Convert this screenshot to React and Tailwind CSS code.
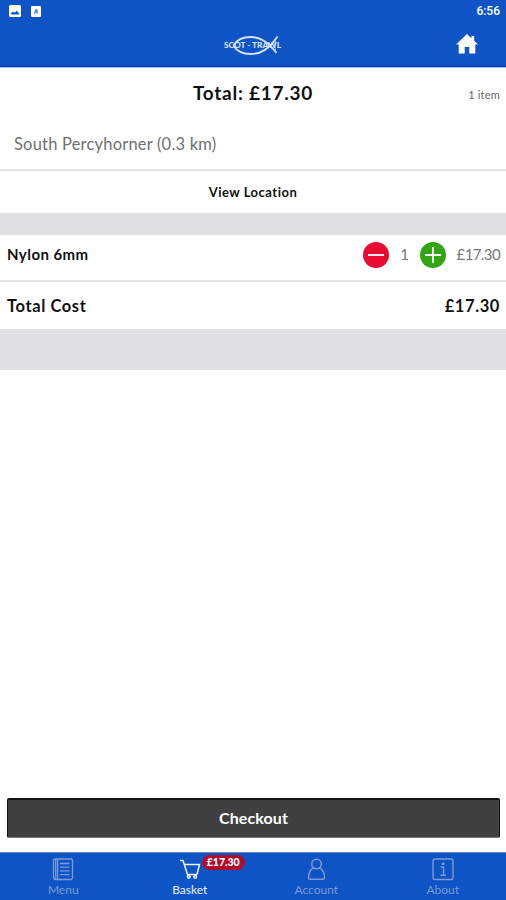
import { useState } from 'react';

const UNIT_PRICE = 17.3;

const formatPrice = (value) => `£${value.toFixed(2)}`;

const PictureIcon = () => (
  <svg width="12" height="12" viewBox="0 0 12 12">
    <rect width="12" height="12" rx="1.5" fill="#fff" />
    <path d="M2.200 9.500V7.800L4.300 6.800 5.800 7.800 7.800 5.800 9.800 8V9.500Z" fill="#0e54c5" />
  </svg>
);

const KeyboardIcon = () => (
  <svg width="10" height="11" viewBox="0 0 10 11">
    <rect width="10" height="11" rx="1.2" fill="#fff" />
    <path d="M2.800 7.800 4.400 3.200h2l.6 4.400H5.600l-.1-1H4.400l-.4 1.200Z" fill="#4f80cf" />
  </svg>
);

const Logo = () => (
  <svg width="60" height="24" viewBox="0 0 60 24" fill="none">
    <path d="M10.500 12.500C14 6.500 20 4 27.500 4 38 4 45 9.500 53.500 20M10.500 12.500C14 18.500 20 21 27.500 21 38 21 45.500 16.500 54.500 3.500" stroke="#d5e2f8" strokeWidth="1.900" />
    <path d="M54.500 3.500c-3.500 5.500-3.500 10.500-1 16.500" stroke="#a9c3ef" strokeWidth="1" />
    <text x="1" y="14.800" textLength="57" lengthAdjust="spacingAndGlyphs" fontSize="6.500" fontWeight="900" fill="#d5e2f8" fontFamily="Lato, sans-serif">SCOT - TRAWL</text>
  </svg>
);

const HomeIcon = () => (
  <svg width="22" height="20" viewBox="0 0 22 20" fill="#fff">
    <path d="M11 0 15.500 4.200V2H18.200V6.800L22 10.500H19.300V19.500H13.300V13H8.700V19.500H2.700V10.500H0Z" />
  </svg>
);

const MenuIcon = () => (
  <svg width="22" height="23" viewBox="0 0 22 23" fill="none" stroke="currentColor" strokeWidth="1.300">
    <rect x="1.500" y="1" width="19" height="20.500" rx="1.800" />
    <path d="M3.700 1v20M5.600 1v20" />
    <path d="M8 5.500h9.500M8 9.200h9.500M8 12.900h9.500M8 16.600h9.500" />
  </svg>
);

const BasketIcon = () => (
  <svg width="22" height="21" viewBox="0 0 22 21" fill="none" stroke="currentColor" strokeWidth="1.500">
    <path d="M1 1.500h3L8.500 15.500h9.500M5.300 5.500H20.500L18 15.500" />
    <circle cx="9.800" cy="17.800" r="1.400" />
    <circle cx="16.200" cy="17.800" r="1.400" />
  </svg>
);

const AccountIcon = () => (
  <svg width="20" height="23" viewBox="0 0 20 23" fill="none" stroke="currentColor" strokeWidth="1.500">
    <circle cx="10.500" cy="6" r="4.800" />
    <path d="M7.300 9.700C4.200 12 2.500 15.500 2.500 19.300c0 1.300.7 2 1.800 2h12.400c1.100 0 1.800-.7 1.800-2 0-3.800-1.700-7.300-4.800-9.600" />
  </svg>
);

const AboutIcon = () => (
  <svg width="22" height="23" viewBox="0 0 22 23" fill="none" stroke="currentColor" strokeWidth="1.400">
    <rect x="1" y="1" width="20" height="20.500" rx="2" />
    <path d="M8.500 9h3v8M8.300 17.300h5.600" />
    <circle cx="11.200" cy="5.800" r=".8" fill="currentColor" />
  </svg>
);

const StepButton = ({ label, plus, onClick }) => (
  <button
    onClick={onClick}
    aria-label={label}
    className={`flex h-[26px] w-[26px] items-center justify-center rounded-full ${plus ? 'bg-[#32a612]' : 'bg-[#e80c30]'}`}
  >
    <svg width="16" height="16" viewBox="0 0 16 16" stroke="#fff" strokeWidth="1.800">
      <path d={plus ? 'M0 8h16M8 0v16' : 'M0 8h16'} />
    </svg>
  </button>
);

const tabs = [
  { id: 'menu', label: 'Menu', icon: MenuIcon },
  { id: 'basket', label: 'Basket', icon: BasketIcon },
  { id: 'account', label: 'Account', icon: AccountIcon },
  { id: 'about', label: 'About', icon: AboutIcon },
];

const App = () => {
  const [quantity, setQuantity] = useState(1);
  const [activeTab, setActiveTab] = useState('basket');
  const total = formatPrice(quantity * UNIT_PRICE);

  return (
    <div className="flex h-screen w-full flex-col bg-white font-[Lato,sans-serif] text-[#111]">
      {/* Status bar and app header */}
      <header className="h-[68px] shrink-0 border-b border-[#9db9ee] bg-[#0e54c5]">
        <div className="flex h-[22px] items-center justify-between pl-[9px] pr-[6px]">
          <div className="flex items-center gap-[10px]">
            <PictureIcon />
            <KeyboardIcon />
          </div>
          <span className="font-[Roboto,sans-serif] text-[12px] font-medium leading-none text-white">6:56</span>
        </div>
        <div className="grid h-[45px] grid-cols-3 items-center border-b-2 border-[#0b47b5] px-[28px]">
          <span />
          <div className="flex justify-center pt-[2px]">
            <Logo />
          </div>
          <div className="flex justify-end pt-px">
            <HomeIcon />
          </div>
        </div>
      </header>

      {/* Order summary */}
      <div className="grid h-[51px] shrink-0 grid-cols-[1fr_auto_1fr] items-center px-[6px]">
        <span />
        <h1 className="text-[19px] font-bold tracking-[0.75px]">Total: {total}</h1>
        <span className="pt-[3px] text-right text-[11px] tracking-[0.2px] text-[#666]">
          {quantity} {quantity === 1 ? 'item' : 'items'}
        </span>
      </div>
      <div className="flex h-[52px] shrink-0 items-center border-b-2 border-[#e3e3e4] px-[14px] text-[16.500px] tracking-[0.2px] text-[#707070]">
        South Percyhorner (0.3 km)
      </div>
      <button className="h-[42px] shrink-0 pt-[2px] text-[13px] font-bold tracking-[0.5px]">View Location</button>
      <div className="h-[22px] shrink-0 bg-[#e1e1e3]" />

      {/* Basket lines */}
      <div className="flex h-[47px] shrink-0 items-center justify-between border-b-2 border-[#e3e3e4] pb-[6px] pl-[7px] pr-[6px]">
        <span className="text-[15px] font-bold tracking-[0.45px]">Nylon 6mm</span>
        <div className="flex items-center text-[15px] text-[#777]">
          <StepButton label="Remove one" onClick={() => setQuantity(Math.max(1, quantity - 1))} />
          <span className="w-[31px] text-center">{quantity}</span>
          <StepButton label="Add one" plus onClick={() => setQuantity(quantity + 1)} />
          <span className="w-[54px] text-right tracking-[-0.6px]">{total}</span>
        </div>
      </div>
      <div className="flex h-[47px] shrink-0 items-center justify-between pl-[7px] pr-[6px] pt-[2px] text-[16.500px] font-bold">
        <span className="tracking-[0.6px]">Total Cost</span>
        <span className="tracking-[0.6px]">{total}</span>
      </div>
      <div className="h-[41px] shrink-0 bg-[#e1e1e3]" />

      <div className="flex-1" />
      <div className="shrink-0 pb-[14px] pl-[7px] pr-[6px]">
        <button className="h-[40px] w-full rounded-[2px] border border-t-2 border-[#111] border-b-[#777] bg-[#404040] pb-[2px] text-[16px] font-bold tracking-[0.1px] text-white">
          Checkout
        </button>
      </div>

      {/* Bottom navigation */}
      <nav className="grid h-[48px] shrink-0 grid-cols-4 border-t border-[#6b8cc2] bg-[#0e54c5]">
        {tabs.map((tab) => (
          <button
            key={tab.id}
            onClick={() => setActiveTab(tab.id)}
            className={`flex flex-col items-center pt-[5px] text-[12px] leading-none ${activeTab === tab.id ? 'text-[#eef3fd]' : 'text-[#7c9ad3]'}`}
          >
            <div className="relative flex h-[23px] items-center">
              <tab.icon />
              {tab.id === 'basket' && (
                <span className="absolute left-[23px] top-[-3px] flex h-[15px] w-[43px] items-center justify-center rounded-full bg-[#b00d2c] text-[10.500px] font-black text-white">
                  {total}
                </span>
              )}
            </div>
            <span className="mt-[3px]">{tab.label}</span>
          </button>
        ))}
      </nav>
    </div>
  );
};

export default App;
